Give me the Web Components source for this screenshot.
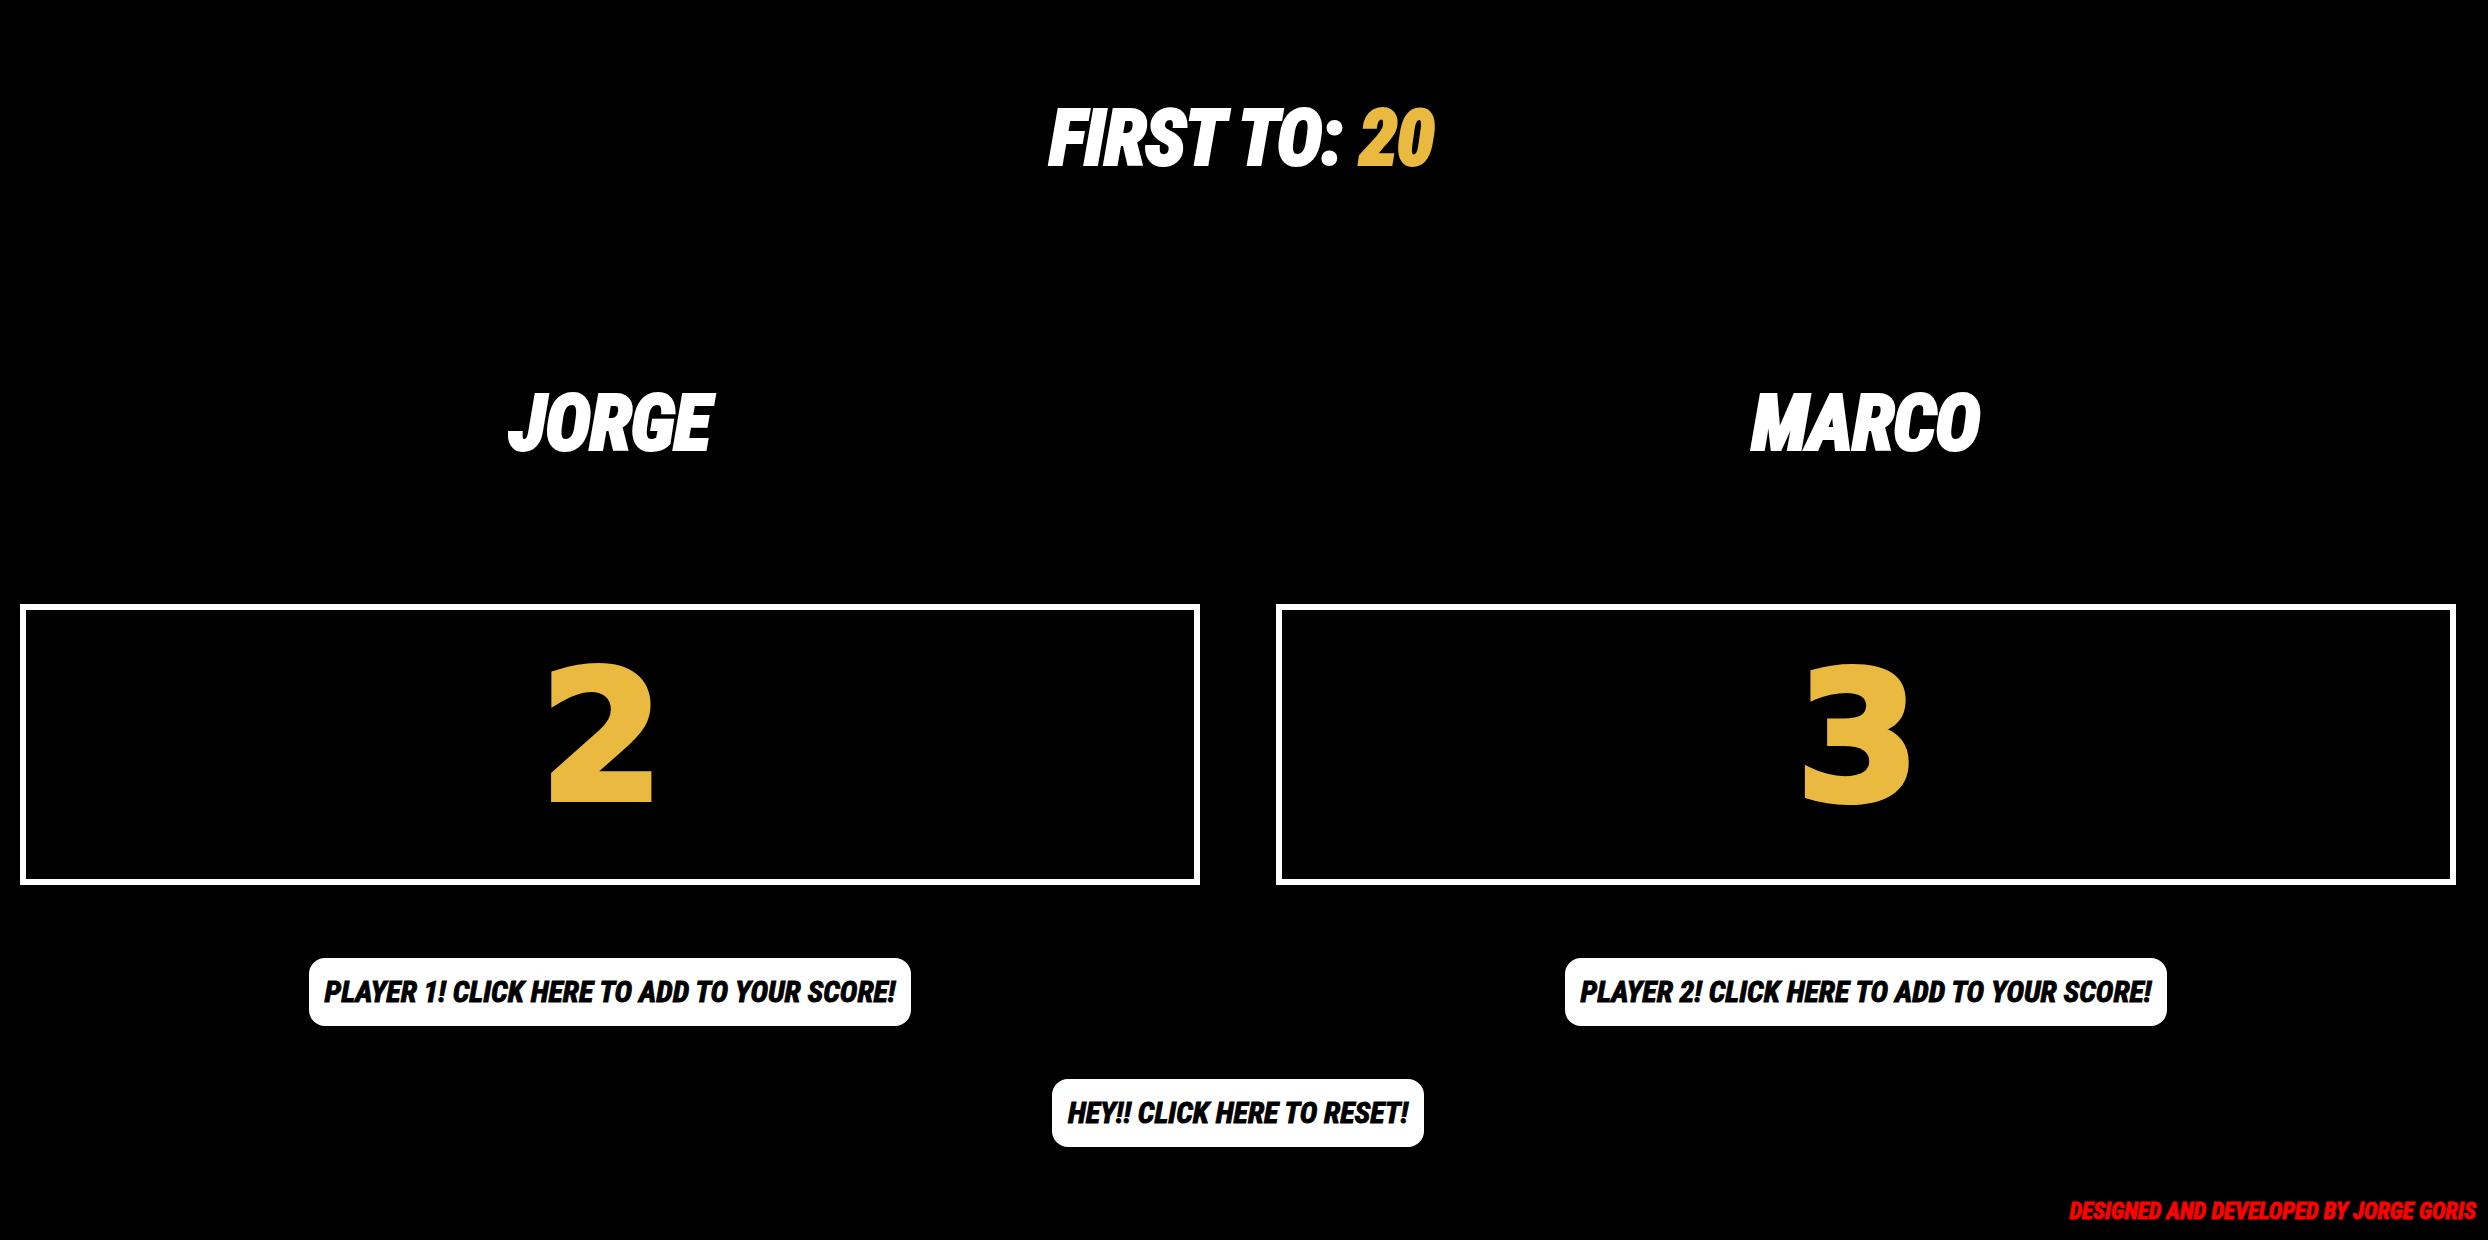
<!DOCTYPE html>
<html lang="en">
<head>
<meta charset="utf-8">
<title>Scoreboard</title>
<style>
  body {
    margin: 0;
    background: #000;
    color: #fff;
    --gold: #eab940;
    --title-size: 76px;
    --title-stroke: 4px;
    font-family: "Roboto Condensed", Roboto, "DejaVu Sans Condensed", sans-serif;
    font-weight: 700;
    font-style: italic;
  }
</style>
</head>
<body>
<score-board>
  <target-score slot="target" value="20"></target-score>
  <player-panel name="Jorge" number="1" score="2"></player-panel>
  <player-panel name="Marco" number="2" score="3"></player-panel>
  <pill-button slot="reset">HEY!! CLICK HERE TO RESET!</pill-button>
  <site-credit slot="credit">DESIGNED AND DEVELOPED BY JORGE GORIS</site-credit>
</score-board>
<script>
const attach = (el, html) => {
  const root = el.attachShadow({ mode: "open" });
  root.innerHTML = html;
  return root;
};

customElements.define("pill-button", class extends HTMLElement {
  constructor() {
    super();
    attach(this, `
      <style>
        :host { display: inline-block; }
        button {
          display: block; height: 68px; padding: 0 16px; border: 0; border-radius: 16px;
          background: #fff; color: #000; font: inherit; font-size: 30px;
          line-height: 40px; white-space: nowrap; cursor: pointer;
          -webkit-text-stroke: 1px currentColor;
        }
      </style>
      <button type="button"><slot></slot></button>`);
  }
});

customElements.define("target-score", class extends HTMLElement {
  connectedCallback() {
    if (this.shadowRoot) return;
    attach(this, `
      <style>
        :host { display: block; text-align: center; padding-right: 4px; }
        h1 { margin: 0; font: inherit; font-size: var(--title-size); line-height: 104px; -webkit-text-stroke: var(--title-stroke) currentColor; }
        span { color: var(--gold); -webkit-text-stroke-color: var(--gold); }
      </style>
      <h1>FIRST TO: <span>${this.getAttribute("value")}</span></h1>`);
  }
});

customElements.define("player-panel", class extends HTMLElement {
  static observedAttributes = ["score"];
  connectedCallback() {
    if (this.shadowRoot) return;
    const root = attach(this, `
      <style>
        :host { display: flex; flex-direction: column; flex: 1; align-items: center; }
        h2 { margin: 0 0 129px; font: inherit; font-size: var(--title-size); line-height: 104px; -webkit-text-stroke: var(--title-stroke) currentColor; }
        .score {
          box-sizing: border-box; width: 100%; margin-bottom: 73px;
          padding: 28px 16px 41px 0; border: 6px solid #fff; text-align: center;
          font: bold 178px/200px "DejaVu Sans", sans-serif; color: var(--gold);
          -webkit-text-stroke: 6px currentColor;
        }
      </style>
      <h2>${this.getAttribute("name").toUpperCase()}</h2>
      <div class="score">${this.getAttribute("score")}</div>
      <pill-button>PLAYER ${this.getAttribute("number")}! CLICK HERE TO ADD TO YOUR SCORE!</pill-button>`);
    root.querySelector("pill-button").addEventListener("click", () =>
      this.setAttribute("score", Number(this.getAttribute("score")) + 1));
  }
  attributeChangedCallback(name, old, value) {
    if (this.shadowRoot) this.shadowRoot.querySelector(".score").textContent = value;
  }
});

customElements.define("site-credit", class extends HTMLElement {
  constructor() {
    super();
    attach(this, `
      <style>
        :host { display: block; text-align: right; }
        p { margin: 0; color: #f00; font-size: 23px; line-height: 32px; -webkit-text-stroke: 1px currentColor; }
      </style>
      <p><slot></slot></p>`);
  }
});

customElements.define("score-board", class extends HTMLElement {
  constructor() {
    super();
    const root = attach(this, `
      <style>
        :host { display: flex; flex-direction: column; box-sizing: border-box; min-height: 100vh; padding: 86px 12px 12px; }
        main { display: flex; gap: 76px; padding: 181px 20px 53px 8px; }
        .reset { display: flex; justify-content: center; padding-right: 12px; }
        footer { margin-top: auto; }
      </style>
      <slot name="target"></slot>
      <main><slot></slot></main>
      <div class="reset"><slot name="reset"></slot></div>
      <footer><slot name="credit"></slot></footer>`);
    root.querySelector(".reset").addEventListener("click", () =>
      this.querySelectorAll("player-panel").forEach(p => p.setAttribute("score", 0)));
  }
});
</script>
</body>
</html>
